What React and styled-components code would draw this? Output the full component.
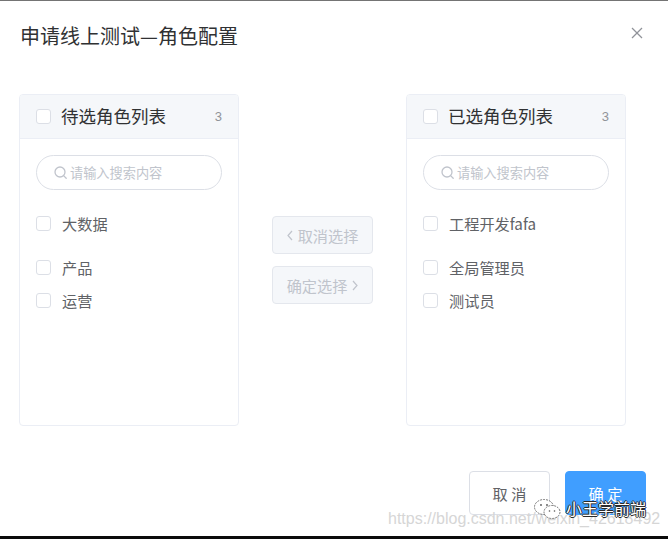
import React from "react";
import styled, { createGlobalStyle } from "styled-components";

const GlobalStyle = createGlobalStyle`
  html, body { margin: 0; padding: 0; background: #fff; }
  body { font-family: "Noto Sans CJK SC", "Noto Sans", sans-serif; }
  * { box-sizing: border-box; }
`;

const Screen = styled.div`
  position: relative;
  width: 668px;
  height: 539px;
  border-top: 1px solid #747474;
  border-bottom: 3px solid #0a0a0a;
  display: flex;
  flex-direction: column;
  overflow: hidden;
  background: #fff;
`;

const Header = styled.header`
  display: flex;
  justify-content: space-between;
  align-items: flex-start;
  height: 93px;
  padding: 22px 25px 0 20px;
`;

const Title = styled.h1`
  margin: 0;
  font-size: 20px;
  line-height: 26px;
  font-weight: 400;
  color: #303133;
`;

const CloseButton = styled.button`
  margin-top: 4px;
  padding: 0;
  border: 0;
  background: none;
  width: 12px;
  height: 12px;
  display: flex;
  cursor: pointer;
`;

const Body = styled.main`
  display: flex;
  align-items: center;
  padding-left: 19px;
`;

const Panel = styled.section`
  width: 220px;
  height: 332px;
  border: 1px solid #ebeef5;
  border-radius: 4px;
  background: #fff;
  overflow: hidden;
  display: flex;
  flex-direction: column;
`;

const PanelHeader = styled.div`
  height: 44px;
  background: #f5f7fa;
  border-bottom: 1px solid #ebeef5;
  display: flex;
  align-items: center;
  padding: 0 16px;
`;

const PanelTitle = styled.span`
  margin-left: 10px;
  font-size: 17.5px;
  line-height: 20px;
  margin-top: -1px;
  color: #303133;
  flex: 1;
`;

const Count = styled.span`
  font-family: "Liberation Sans", Arial, sans-serif;
  font-size: 13px;
  color: #909399;
`;

const Box = styled.span`
  width: 15px;
  height: 15px;
  border: 1px solid #dcdfe6;
  border-radius: 3px;
  background: #fff;
  flex: none;
`;

const Search = styled.div`
  margin: 16px 16px 0;
  height: 35px;
  border: 1px solid #dcdfe6;
  border-radius: 18px;
  display: flex;
  align-items: center;
  padding-left: 17px;
  gap: 3px;
`;

const Placeholder = styled.span`
  font-size: 13.2px;
  color: #c0c4cc;
`;

const List = styled.ul`
  list-style: none;
  margin: 17px 0 0;
  padding: 0;
`;

const Item = styled.li`
  height: 33px;
  display: flex;
  align-items: center;
  padding-left: 16px;
  margin-bottom: ${(p) => (p.$spaced ? "11px" : "0")};
`;

const ItemLabel = styled.span`
  margin-left: 11px;
  font-size: 15.2px;
  line-height: 18px;
  margin-top: -2px;
  color: #606266;
`;

const Buttons = styled.div`
  display: flex;
  flex-direction: column;
  gap: 12px;
  margin: 0 33px 0 33px;
`;

const MoveButton = styled.button`
  width: 101px;
  height: 38px;
  border: 1px solid #e4e7ed;
  border-radius: 4px;
  background: #f5f7fa;
  color: #c0c4cc;
  font-family: inherit;
  font-size: 15.2px;
  display: flex;
  align-items: center;
  justify-content: center;
  gap: 5px;
  padding: 0;
`;

const Footer = styled.footer`
  display: flex;
  justify-content: flex-end;
  gap: 15px;
  margin-top: 45px;
  padding-right: 22px;
`;

const FooterButton = styled.button`
  width: 81px;
  height: 44px;
  border-radius: 4px;
  font-family: inherit;
  font-size: 15.2px;
  border: 1px solid ${(p) => (p.$primary ? "#409eff" : "#dcdfe6")};
  background: ${(p) => (p.$primary ? "#409eff" : "#fff")};
  color: ${(p) => (p.$primary ? "#fff" : "#606266")};
  padding: 0;
`;

const Url = styled.span`
  position: absolute;
  left: 388px;
  top: 509px;
  font-family: "Liberation Sans", Arial, sans-serif;
  font-size: 16px;
  line-height: 18px;
  color: #d6d6d6;
  white-space: nowrap;
`;

const Brand = styled.span`
  position: absolute;
  left: 566px;
  top: 497px;
  font-size: 16px;
  line-height: 20px;
  color: #fff;
  text-shadow: -1px 0 #2a2a2a, 1px 0 #2a2a2a, 0 -1px #2a2a2a, 0 1px #2a2a2a;
  white-space: nowrap;
`;

const BrandIcon = styled.svg`
  position: absolute;
  left: 533px;
  top: 497px;
`;

const Check = () => <Box />;

const SearchIcon = () => (
  <svg width="13" height="13" viewBox="0 0 13 13" fill="none" stroke="#c0c4cc" strokeWidth="1.3">
    <circle cx="6" cy="6" r="5" />
    <line x1="9.6" y1="9.6" x2="12.2" y2="12.2" strokeLinecap="round" />
  </svg>
);

const Chevron = ({ dir }) => (
  <svg width="6" height="11" viewBox="0 0 6 11" fill="none" stroke="#c0c4cc" strokeWidth="1.2">
    {dir === "left" ? <polyline points="5,1 1,5.5 5,10" /> : <polyline points="1,1 5,5.5 1,10" />}
  </svg>
);

const TransferPanel = ({ title, items }) => (
  <Panel>
    <PanelHeader>
      <Check />
      <PanelTitle>{title}</PanelTitle>
      <Count>{items.length}</Count>
    </PanelHeader>
    <Search>
      <SearchIcon />
      <Placeholder>请输入搜索内容</Placeholder>
    </Search>
    <List>
      {items.map((it, i) => (
        <Item key={it} $spaced={i === 0}>
          <Check />
          <ItemLabel>{it}</ItemLabel>
        </Item>
      ))}
    </List>
  </Panel>
);

export default function App() {
  return (
    <>
      <GlobalStyle />
      <Screen>
        <Header>
          <Title>申请线上测试—角色配置</Title>
          <CloseButton aria-label="close">
            <svg width="12" height="12" viewBox="0 0 12 12" stroke="#909399" strokeWidth="1.2">
              <line x1="1" y1="1" x2="11" y2="11" />
              <line x1="11" y1="1" x2="1" y2="11" />
            </svg>
          </CloseButton>
        </Header>
        <Body>
          <TransferPanel title="待选角色列表" items={["大数据", "产品", "运营"]} />
          <Buttons>
            <MoveButton>
              <Chevron dir="left" />
              取消选择
            </MoveButton>
            <MoveButton>
              确定选择
              <Chevron dir="right" />
            </MoveButton>
          </Buttons>
          <TransferPanel title="已选角色列表" items={["工程开发fafa", "全局管理员", "测试员"]} />
        </Body>
        <Footer>
          <FooterButton>取 消</FooterButton>
          <FooterButton $primary>确 定</FooterButton>
        </Footer>
        <Url>https://blog.csdn.net/weixin_42618492</Url>
        <BrandIcon width="30" height="22" viewBox="0 0 30 22" fill="#fff" stroke="#555" strokeWidth="0.8">
          <ellipse cx="11" cy="9" rx="9.5" ry="7.5" strokeDasharray="2 1" />
          <ellipse cx="19" cy="14" rx="8" ry="6.5" strokeDasharray="2 1" />
          <circle cx="8" cy="7" r="0.9" fill="#555" stroke="none" />
          <circle cx="14" cy="7" r="0.9" fill="#555" stroke="none" />
          <circle cx="16.5" cy="13" r="0.8" fill="#555" stroke="none" />
          <circle cx="21.5" cy="13" r="0.8" fill="#555" stroke="none" />
        </BrandIcon>
        <Brand>小王学前端</Brand>
      </Screen>
    </>
  );
}
